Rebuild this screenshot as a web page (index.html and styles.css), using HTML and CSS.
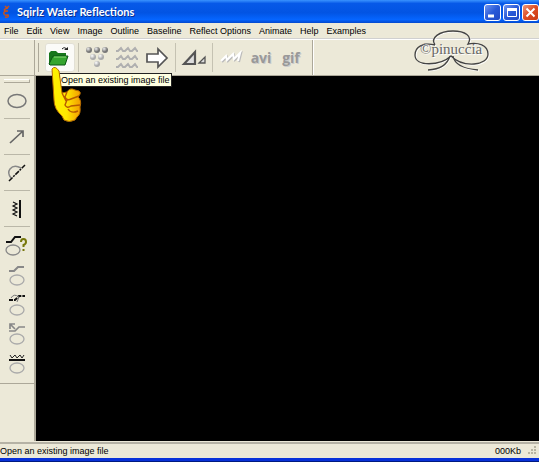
FILE: index.html
```html
<!DOCTYPE html>
<html lang="en">
<head>
<meta charset="utf-8">
<title>Sqirlz Water Reflections</title>
<link rel="stylesheet" href="styles.css">
</head>
<body>
<div class="window">
  <header class="titlebar">
    <svg class="app-icon" width="8" height="14" viewBox="0 0 8 14"><path d="M2 1l2 2 2-2M5 3Q0 4 2 6H5Q0 6 1 9Q2 11 5 10Q6 13 2 12" fill="none" stroke="#c9541c" stroke-width="1.500"/></svg>
    <h1>Sqirlz Water Reflections</h1>
    <div class="window-controls">
      <button aria-label="Minimize"><svg width="15" height="15"><path d="M3 11h6" stroke="#fff" stroke-width="3"/></svg></button>
      <button aria-label="Maximize"><svg width="15" height="15"><path d="M3 4.500h10" stroke="#fff" stroke-width="3"/><path d="M3.500 4v7.500h9V4" fill="none" stroke="#fff"/></svg></button>
      <button class="close" aria-label="Close"><svg width="15" height="15"><path d="M3.500 3.500l8 8M11.500 3.500l-8 8" stroke="#fff" stroke-width="2"/></svg></button>
    </div>
  </header>
  <nav class="menu">
    <button>File</button><button>Edit</button><button>View</button><button>Image</button><button>Outline</button><button>Baseline</button><button>Reflect Options</button><button>Animate</button><button>Help</button><button>Examples</button>
  </nav>
  <div class="toolbar-row">
    <div class="toolbar">
      <div class="group first">
        <button class="hot" aria-label="Open">
          <svg width="28" height="28" viewBox="0 0 28 28"><path d="M3 20V9l2-2h5l2 2h8v11z" fill="#17761b"/><path d="M3 20l4-8h15l-3 9H4z" fill="#35a52e" stroke="#0a5712"/><path d="M8 13h12" stroke="#8bdb74"/><path d="M16 5q3-3 5 1" fill="none" stroke="#222"/><path d="M18 6h4V3z" fill="#222"/></svg>
        </button>
      </div>
      <div class="group">
        <button aria-label="Rain">
          <svg width="26" height="24" viewBox="0 0 26 24"><defs><radialGradient id="ball" cx=".35" cy=".3"><stop offset="0" stop-color="#eee"/><stop offset="1" stop-color="#777"/></radialGradient><radialGradient id="pale" cx=".35" cy=".3"><stop offset="0" stop-color="#fff"/><stop offset="1" stop-color="#aaa"/></radialGradient></defs><g fill="url(#ball)"><circle cx="5" cy="4" r="3"/><circle cx="13" cy="4" r="3"/><circle cx="21" cy="4" r="3"/></g><g fill="url(#pale)"><circle cx="9" cy="11" r="3"/><circle cx="17" cy="11" r="3"/><circle cx="13" cy="18" r="3"/></g></svg>
        </button>
        <button aria-label="Waves">
          <svg width="26" height="24" viewBox="0 0 26 24" fill="none" stroke="#b0b0b0" stroke-width="2"><path id="wave" d="M2 5h2l3-3 2 3h2l3-3 2 3h2l3-3 2 3h1"/><use href="#wave" y="8"/><use href="#wave" y="16"/></svg>
        </button>
        <button aria-label="Next">
          <svg width="24" height="22" viewBox="0 0 24 22"><path d="M2 7h11V2l9 9-9 9v-5H2z" fill="#fff" stroke="#555" stroke-width="1.700"/></svg>
        </button>
      </div>
      <div class="group">
        <button aria-label="Scale">
          <svg width="26" height="20" viewBox="0 0 26 20" fill="#ddd" stroke="#555"><path d="M3 16L14 4v12z" stroke-width="2.200"/><path d="M18 15l6-6v6z" stroke-width="1.300"/></svg>
        </button>
      </div>
      <div class="group last">
        <button aria-label="Ripple">
          <svg width="24" height="18" viewBox="0 0 24 18" fill="none" stroke-width="2"><path d="M3 13l5-5 1 4 6-6 1 5 6-6-2 8" stroke="#bbb"/><path d="M2 12l5-5 1 4 6-6 1 5 6-6-2 8" stroke="#fff"/></svg>
        </button>
        <button class="word">avi</button>
        <button class="word">gif</button>
      </div>
    </div>
    <div class="tooltip" role="tooltip">Open an existing image file</div>
    <svg class="hand" width="32" height="58" viewBox="0 0 32 58"><defs><linearGradient id="skin"><stop offset="0" stop-color="#fff200"/><stop offset=".5" stop-color="#ffe900"/><stop offset="1" stop-color="#f29b00"/></linearGradient></defs><path d="M2 3Q5-1 9 5L12 27 17 26Q20 21 25 24L29 25Q32 27 28 31Q32 34 30 41Q31 48 27 51L25 54Q19 57 14 54L12 50Q4 43 4 34Z" fill="url(#skin)" stroke="#b66b00"/><path d="M12 27l4 8M17 26l-2 5q2 4 6 2l8-3M17 34l-2 5q2 4 6 1l9-1M18 43q3 5 10 2" fill="none" stroke="#b75a00" stroke-width="1.400"/></svg>
    <svg class="watermark" width="78" height="46" viewBox="0 0 78 46"><g fill="none"><path d="M23 17C11 14 3 19 3 27C3 39 27 38 39 28C51 40 76 38 76 26C76 17 66 14 56 16C61 8 53 3 41 3C27 3 18 10 23 17M38 28Q34 41 16 42M41 28Q43 40 66 42" stroke="#fff"/><path d="M22 16C10 13 2 18 2 26C2 38 27 37 38 27C50 39 75 37 75 25C75 16 65 13 55 15C60 7 52 2 40 2C26 2 17 9 22 16M37 27Q33 40 15 41M40 27Q42 39 65 41" stroke="#444" stroke-width="1.300"/></g><text x="7" y="25">©pinuccia</text></svg>
  </div>
  <div class="workspace">
    <aside class="side">
      <div class="grip"></div>
      <button class="tool" aria-label="Ellipse"><svg width="24" height="24" viewBox="0 0 24 24"><ellipse cx="12" cy="12" rx="9" ry="6.500" fill="none" stroke="#777" stroke-width="1.500"/></svg></button>
      <button class="tool" aria-label="Arrow"><svg width="24" height="24" viewBox="0 0 24 24"><path d="M5 18L18 6M12 6h6v6" fill="none" stroke="#666" stroke-width="1.700"/></svg></button>
      <button class="tool" aria-label="Arc"><svg width="24" height="24" viewBox="0 0 24 24" fill="none"><path d="M6 17Q2 12 5 8Q9 3 16 7" stroke="#888" stroke-width="1.500"/><path d="M4 20L20 4" stroke="#111" stroke-width="1.500" stroke-dasharray="5 1 2 1"/></svg></button>
      <button class="tool" aria-label="Vertical waves"><svg width="24" height="24" viewBox="0 0 24 24" fill="none" stroke="#111"><path d="M15 3v18" stroke-width="2"/><path d="M8 5l4 2-4 2 4 2-4 2 4 2-4 2 4 2" stroke-width="1.200"/></svg></button>
      <div class="shapes">
        <button aria-label="Shape help"><svg width="30" height="26" viewBox="0 0 30 26" fill="none"><path d="M4 9h5l4-5h6" stroke="#111" stroke-width="2"/><ellipse cx="11" cy="17" rx="7" ry="5" stroke="#888" stroke-width="1.300"/><path d="M19 9q0-3 2.500-3t2.500 3q0 2-2.500 3v2M21.500 16v2" stroke="#77770a" stroke-width="2"/></svg></button>
        <button aria-label="Step"><svg width="30" height="26" viewBox="0 0 30 26" fill="none"><path d="M7 8h5l4-4h6" stroke="#888" stroke-width="2"/><ellipse cx="15" cy="17" rx="7" ry="5" stroke="#aaa" stroke-width="1.300"/></svg></button>
        <button aria-label="Curve"><svg width="30" height="26" viewBox="0 0 30 26" fill="none"><path d="M7 7h6l4-4h6" stroke="#111" stroke-width="2" stroke-dasharray="4 1"/><path d="M9 5q3-5 8-1l-2 5" stroke="#777"/><ellipse cx="15" cy="17" rx="7" ry="5" stroke="#aaa" stroke-width="1.300"/></svg></button>
        <button aria-label="Back step"><svg width="30" height="26" viewBox="0 0 30 26" fill="none"><path d="M7 8h6l4-4h6M8 6V1h5M8 1l5 5" stroke="#888" stroke-width="1.700"/><ellipse cx="15" cy="16" rx="7" ry="5" stroke="#aaa" stroke-width="1.300"/></svg></button>
        <button aria-label="Horizontal waves"><svg width="30" height="26" viewBox="0 0 30 26" fill="none"><path d="M8 2l2 3 3-3 2 3 3-3 2 3 2-3" stroke="#222"/><path d="M7 7h16" stroke="#111" stroke-width="2"/><ellipse cx="15" cy="15" rx="7" ry="5" stroke="#aaa" stroke-width="1.300"/></svg></button>
      </div>
    </aside>
    <main class="canvas"></main>
  </div>
  <footer class="status"><span>Open an existing image file</span><span class="size">000Kb</span>
    <svg width="12" height="12" viewBox="0 0 12 12"><path d="M8 2h2M5 5h2M8 5h2M2 8h2M5 8h2M8 8h2" stroke="#b8b4a2" stroke-width="2"/></svg>
  </footer>
  <div class="frame-edge"></div>
</div>
</body>
</html>
```
FILE: styles.css
```css
* { box-sizing: border-box; }
body { margin: 0; }
button { padding: 0; border: 0; background: none; font: inherit; color: inherit; }
svg { display: block; }
.window {
  display: flex; flex-direction: column; min-height: 100vh;
  background: #ece9d8; color: #000;
  font: 9px/14px "Liberation Sans", sans-serif;
}
.titlebar {
  display: flex; align-items: center; height: 23px; padding-left: 3px;
  background: linear-gradient(#3a93ff, #0759e8 15%, #0254e3 55%, #0565ff 85%, #0348cd);
}
.titlebar h1 {
  flex: 1; margin: 0 0 0 6px; color: #fff; text-shadow: 1px 1px #0a2f90;
  font: bold 11px/16px Lato, sans-serif;
}
.window-controls { display: flex; gap: 2px; padding-top: 1px; }
.window-controls button {
  width: 17px; height: 17px; border: 1px solid #fff; border-radius: 3px;
  background: linear-gradient(135deg, #7196f0, #2859d8 50%, #2249c4);
}
.window-controls .close { background: linear-gradient(135deg, #ee987a, #dd4b22 50%, #c93a14); }
.menu { display: flex; gap: 8px; height: 16px; padding-left: 4px; border-bottom: 1px solid #d0d0d0; }
.toolbar-row { position: relative; height: 37px; padding-left: 34px; border-top: 1px solid #fff; border-bottom: 1px solid #aca899; }
.toolbar {
  display: flex; align-items: center; width: 279px; height: 35px;
  border-left: 1px solid #aca899; border-right: 1px solid #aca899; box-shadow: 1px 0 #fff;
}
.group { display: flex; align-items: center; height: 29px; padding: 0 3px; border-right: 1px solid #c5c2b2; }
.group button { display: grid; place-items: center; width: 30px; height: 29px; }
.group.first { padding: 0 3px 0 6px; margin-left: 3px; border-left: 1px solid #aca899; }
.group.last { border-right: 0; }
.group .hot { border: 1px solid #e2e0d5; border-radius: 3px; background: #fbfbf8; }
.group .word { color: #999; font: bold 14px/20px "Open Sans", sans-serif; text-shadow: 1px 1px #ccc; }
.tooltip {
  position: absolute; left: 59px; top: 33px; z-index: 1; height: 14px; padding: 0 1px;
  border: 1px solid #222; background: #ffffe1; line-height: 12px; white-space: nowrap;
}
.hand { position: absolute; left: 50px; top: 26px; z-index: 2; }
.watermark { position: absolute; right: 48px; top: -11px; }
.watermark text { fill: #666; font: 15px "Liberation Serif", serif; text-shadow: 1px 1px #fff; }
.workspace { display: flex; flex: 1; }
.side { width: 36px; padding: 3px 4px 0; border-right: 2px solid #aca899; }
.grip { height: 4px; border: 1px solid #aca899; border-top-color: #fff; border-left: 0; }
.tool { display: grid; place-items: center; width: 26px; height: 36px; border-bottom: 1px solid #bab7a8; }
.shapes { margin: 0 -4px; padding: 3px 2px; border-bottom: 1px solid #aca899; }
.shapes button { display: block; height: 30px; padding-top: 2px; }
.canvas { flex: 1; background: #000; }
.status {
  display: flex; align-items: center; height: 16px; margin-top: 1px; padding-right: 1px;
  border-top: 2px solid #b5b2a5;
}
.size { margin-left: auto; padding-right: 5px; }
.frame-edge { height: 4px; border-top: 3px solid #0831d9; background: #001a80; }
```
